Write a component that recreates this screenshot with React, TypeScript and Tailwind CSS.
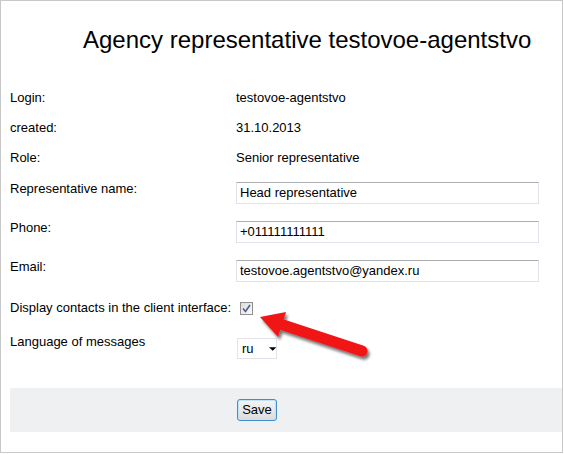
import React from 'react'

type Row = { label: string; value: string; kind: 'text' | 'input' }

const rows: Row[] = [
    { label: 'Login:', value: 'testovoe-agentstvo', kind: 'text' },
    { label: 'created:', value: '31.10.2013', kind: 'text' },
    { label: 'Role:', value: 'Senior representative', kind: 'text' },
    { label: 'Representative name:', value: 'Head representative', kind: 'input' },
    { label: 'Phone:', value: '+011111111111', kind: 'input' },
    { label: 'Email:', value: 'testovoe.agentstvo@yandex.ru', kind: 'input' },
]

function TextBox({ value }: { value: string }) {
    return (
        <div className="mt-[2px] h-[22px] w-[303px] border border-[#e2e3ea] border-t-[#abadb3] bg-white pl-[3px] leading-[20px]">
            {value}
        </div>
    )
}

function CheckBox() {
    return (
        <div className="ml-[4px] mt-[2px] flex h-[13px] w-[13px] items-center justify-center border border-[#8f8f8f] bg-gradient-to-br from-[#dcdcdc] to-[#fafafa]">
            <svg width="9" height="9" viewBox="0 0 9 9">
                <path d="M1 4.5 L3.5 7.5 L8 1" fill="none" stroke="#4a5c94" strokeWidth="1.6" />
            </svg>
        </div>
    )
}

function LangSelect() {
    return (
        <div className="ml-[1px] mt-[4px] flex h-[21px] w-[40px] items-center border border-[#e2e3ea] bg-white pl-[4px]">
            <span className="leading-none">ru</span>
            <svg className="ml-[15px]" width="8" height="4" viewBox="0 0 8 4">
                <path d="M0 0 L8 0 L4 4 Z" fill="#000" />
            </svg>
        </div>
    )
}

function RedArrow() {
    return (
        <svg className="absolute left-[245px] top-[300px]" width="130" height="70" viewBox="245 300 130 70">
            <defs>
                <filter id="arrowShadow" x="-20%" y="-40%" width="140%" height="180%">
                    <feDropShadow dx="2" dy="3" stdDeviation="1.5" floodColor="#000" floodOpacity="0.55" />
                </filter>
            </defs>
            <g filter="url(#arrowShadow)">
                <line x1="279" y1="323" x2="361" y2="350" stroke="#f01818" strokeWidth="11" strokeLinecap="round" />
                <polygon points="259,316 285,311 277,336" fill="#f01818" />
            </g>
        </svg>
    )
}

export default function App() {
    return (
        <div className="relative h-[453px] w-[563px] border border-[#c8c8c8] bg-white font-['Liberation_Sans',Arial,sans-serif] text-[13px] leading-[15px] text-black">
            <h1 className="pl-[82px] pt-[25px] text-[24px] leading-[28px] font-normal">
                Agency representative testovoe-agentstvo
            </h1>

            <div className="mt-[36px] pl-[9px]">
                {rows.map((r) => (
                    <div key={r.label} className={`flex items-start ${r.kind === 'text' ? 'h-[30px]' : 'h-[39px]'}`}>
                        <div className={`w-[226px] ${r.kind === 'input' ? 'mt-[1px]' : ''}`}>{r.label}</div>
                        {r.kind === 'text' ? <div>{r.value}</div> : <TextBox value={r.value} />}
                    </div>
                ))}

                <div className="flex h-[34px] items-start pt-[3px]">
                    <div className="w-[226px]">Display contacts in the client interface:</div>
                    <CheckBox />
                </div>

                <div className="flex h-[34px] items-start pt-[3px]">
                    <div className="w-[226px]">Language of messages</div>
                    <LangSelect />
                </div>
            </div>

            <div className="ml-[9px] mt-[23px] h-[44px] bg-[#eff0f2] pl-[227px] pt-[11px]">
                <button className="h-[22px] w-[40px] rounded-[3px] border border-[#3c8fd0] bg-gradient-to-b from-[#f4f4f4] to-[#dcdcdc] text-[13px] leading-[18px] shadow-[inset_0_0_0_1px_#bfe3f7]">
                    Save
                </button>
            </div>

            <RedArrow />
        </div>
    )
}
